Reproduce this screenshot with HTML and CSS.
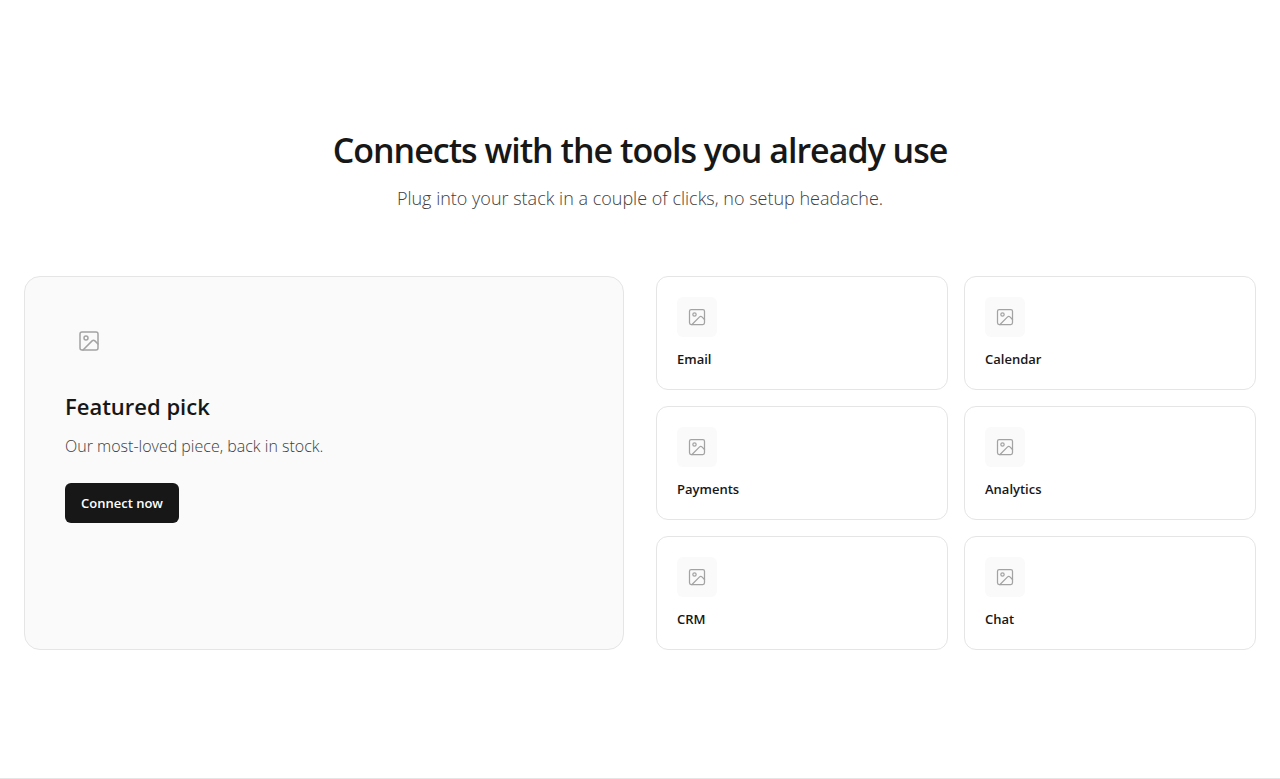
FILE: index.html
```html
<!DOCTYPE html>
<html lang="en">
    <head>
        <meta charset="utf-8" />
        <meta name="viewport" content="width=device-width, initial-scale=1" />
        <title>Integrations</title>
        <link rel="stylesheet" href="styles.css">
    </head>
    <body>
        <svg class="sprite" aria-hidden="true">
            <symbol id="image" viewBox="0 0 24 24">
                <rect x="3" y="3" width="18" height="18" rx="2" />
                <circle cx="9" cy="9" r="2" />
                <path d="M21 15l-3.1-3.1a2 2 0 0 0-2.8 0L6 21" />
            </symbol>
        </svg>
        <section class="integrations">
            <div class="container">
                <div class="header">
                    <h2>Connects with the tools you already use</h2>
                    <p>Plug into your stack in a couple of clicks, no setup headache.</p>
                </div>
                <div class="content">
                    <div class="featured">
                        <div class="featured-icon"><svg><use href="#image" /></svg></div>
                        <h3>Featured pick</h3>
                        <p>Our most-loved piece, back in stock.</p>
                        <button type="button">Connect now</button>
                    </div>
                    <div class="tools">
                        <div class="tool">
                            <div class="tool-icon"><svg><use href="#image" /></svg></div>
                            <h4>Email</h4>
                        </div>
                        <div class="tool">
                            <div class="tool-icon"><svg><use href="#image" /></svg></div>
                            <h4>Calendar</h4>
                        </div>
                        <div class="tool">
                            <div class="tool-icon"><svg><use href="#image" /></svg></div>
                            <h4>Payments</h4>
                        </div>
                        <div class="tool">
                            <div class="tool-icon"><svg><use href="#image" /></svg></div>
                            <h4>Analytics</h4>
                        </div>
                        <div class="tool">
                            <div class="tool-icon"><svg><use href="#image" /></svg></div>
                            <h4>CRM</h4>
                        </div>
                        <div class="tool">
                            <div class="tool-icon"><svg><use href="#image" /></svg></div>
                            <h4>Chat</h4>
                        </div>
                    </div>
                </div>
            </div>
        </section>
    </body>
</html>
```

FILE: styles.css
```css
*{
    box-sizing: border-box;
}

body{
    margin: 0;
    background-color: #fff;
    color: #171717;
    font-family: "Open Sans", "Noto Sans", sans-serif;
}

h2, h3, h4, p{
    margin: 0;
    font-weight: 600;
}

svg{
    display: block;
    fill: none;
    stroke: #a3a3a3;
    stroke-width: 2;
    stroke-linecap: round;
    stroke-linejoin: round;
}

.sprite{
    display: none;
}

.integrations{
    padding: 128px 24px;
    border-bottom: 1px solid #e5e5e5;
}

.container{
    max-width: 1280px;
    margin: 0 auto;
}

.header{
    margin-bottom: 64px;
    text-align: center;
}

.header h2{
    font-size: 34px;
    line-height: 45px;
    letter-spacing: -1px;
}

.header p{
    margin-top: 12px;
    color: #404040;
    font-size: 18px;
    font-weight: 300;
    line-height: 27px;
}

.content{
    display: grid;
    grid-template-columns: 1fr 1fr;
    gap: 32px;
}

.featured{
    padding: 40px;
    border: 1px solid #e5e5e5;
    border-radius: 16px;
    background-color: #fafafa;
}

.featured-icon{
    display: flex;
    align-items: center;
    justify-content: center;
    width: 48px;
    height: 48px;
    margin-bottom: 24px;
}

.featured-icon svg{
    width: 24px;
    height: 24px;
}

.featured h3{
    font-size: 22px;
    line-height: 34px;
}

.featured p{
    margin: 10px 0 24px;
    color: #404040;
    font-size: 16px;
    font-weight: 300;
    line-height: 26px;
}

.featured button{
    height: 40px;
    padding: 0 16px;
    border: 0;
    border-radius: 6px;
    background-color: #171717;
    color: #fff;
    font-family: inherit;
    font-size: 13px;
    font-weight: 600;
    cursor: pointer;
}

.tools{
    display: grid;
    grid-template-columns: 1fr 1fr;
    gap: 16px;
}

.tool{
    padding: 20px;
    border: 1px solid #e5e5e5;
    border-radius: 12px;
}

.tool-icon{
    display: flex;
    align-items: center;
    justify-content: center;
    width: 40px;
    height: 40px;
    margin-bottom: 12px;
    border-radius: 6px;
    background-color: #fafafa;
}

.featured-icon svg, .tool-icon svg{
    stroke-width: 1.5;
}

.tool-icon svg{
    width: 20px;
    height: 20px;
}

.tool h4{
    font-size: 13px;
    line-height: 20px;
}

@media (max-width: 768px){
    .content{
        grid-template-columns: 1fr;
    }
}
```
